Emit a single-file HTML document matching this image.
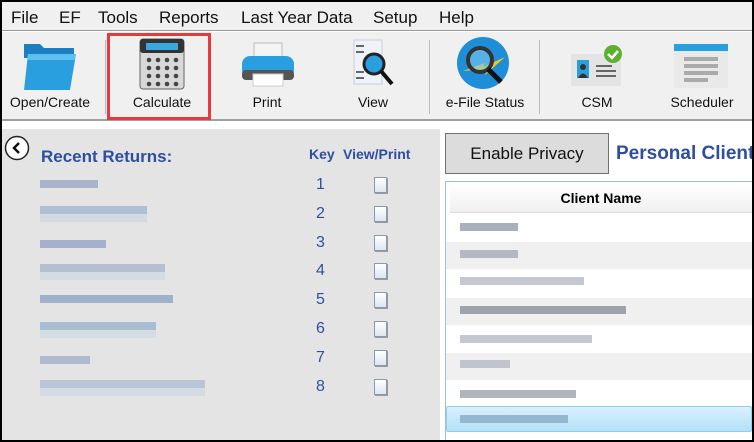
<!DOCTYPE html>
<html><head><style>
*{margin:0;padding:0;box-sizing:border-box}
body{width:754px;height:442px;overflow:hidden;background:#000;font-family:"Liberation Sans",sans-serif;position:relative}
#f{position:absolute;left:2px;top:2px;width:750px;height:438px;background:#fff;overflow:hidden}
.menu{position:absolute;left:0;top:0;width:750px;height:29px;background:#f0f0f0;border-bottom:1px solid #999;font-size:17px;color:#111}
.menu span{position:absolute;top:6px}
.tb{position:absolute;left:0;top:30px;width:750px;height:89px;background:#f0f0f0;border-bottom:2px solid #a0a0a0}
.tl{position:absolute;top:62px;font-size:14px;color:#111;text-align:center}
.sep{position:absolute;top:8px;width:1px;height:74px;background:#bbb}
.lp{position:absolute;left:0;top:127px;width:438px;height:311px;background:#e4e4e4}
.b{position:absolute;height:8px}
.k{position:absolute;left:314px;font-size:16px;color:#2e4fa0}
.doc{position:absolute;left:372px;width:13px;height:16px;background:linear-gradient(#fff,#dde6f0);border:1px solid #8a99ad;box-shadow:1px 1px 0 #999}
.rw{position:absolute;left:444px;width:306px;height:27px}
</style></head><body><div id="f">
<div class="menu"><span style="left:9px">File</span><span style="left:57px">EF</span><span style="left:96px">Tools</span><span style="left:157px">Reports</span><span style="left:239px">Last Year Data</span><span style="left:371px">Setup</span><span style="left:437px">Help</span></div>
<div class="tb">
<svg style="position:absolute;left:20px;top:8px" width="58" height="50"><path d="M2 4h16l4 4h30v10H2z" fill="#1b7fc4"/><path d="M6 14h48l-6 36H2z" fill="#2a9fe0"/><path d="M6 14h48l-1 6H5z" fill="#5cc0f0"/></svg>
<div class="tl" style="left:3px;width:90px">Open/Create</div>
<div class="sep" style="left:103px"></div>
<div style="position:absolute;left:105px;top:1px;width:104px;height:87px;border:3px solid #e8393c"></div>
<svg style="position:absolute;left:137px;top:6px" width="46" height="52"><rect x="1" y="1" width="44" height="50" rx="3" fill="#d8d8d8" stroke="#666"/><rect x="1" y="1" width="44" height="14" rx="3" fill="#333"/><rect x="7" y="5" width="32" height="7" fill="#3aa8e0"/><g fill="#444"><circle cx="10" cy="22" r="2.3"/><circle cx="19" cy="22" r="2.3"/><circle cx="28" cy="22" r="2.3"/><circle cx="37" cy="22" r="2.3"/><circle cx="10" cy="30" r="2.3"/><circle cx="19" cy="30" r="2.3"/><circle cx="28" cy="30" r="2.3"/><circle cx="37" cy="30" r="2.3"/><circle cx="10" cy="38" r="2.3"/><circle cx="19" cy="38" r="2.3"/><circle cx="28" cy="38" r="2.3"/><circle cx="37" cy="38" r="2.3"/><circle cx="10" cy="46" r="2.3"/><circle cx="19" cy="46" r="2.3"/><circle cx="28" cy="46" r="2.3"/><circle cx="37" cy="46" r="2.3"/></g></svg>
<div class="tl" style="left:110px;width:100px">Calculate</div>
<svg style="position:absolute;left:238px;top:10px" width="56" height="46"><rect x="14" y="1" width="28" height="16" fill="#f4f4f4" stroke="#bbb"/><rect x="2" y="14" width="52" height="22" rx="8" fill="#2a9fe0"/><rect x="2" y="28" width="52" height="10" rx="4" fill="#555"/><rect x="13" y="32" width="30" height="12" fill="#fff" stroke="#ccc"/></svg>
<div class="tl" style="left:230px;width:70px">Print</div>
<svg style="position:absolute;left:350px;top:6px" width="44" height="52"><rect x="2" y="2" width="28" height="44" fill="#eef3f8" stroke="#ccd"/><g stroke="#666" stroke-width="2"><path d="M4 8h8M4 14h8M4 34h8M4 40h8"/></g><circle cx="22" cy="26" r="10" fill="#2a9fe0" stroke="#222" stroke-width="3"/><path d="M29 33l11 13" stroke="#111" stroke-width="4"/></svg>
<div class="tl" style="left:336px;width:70px">View</div>
<div class="sep" style="left:427px"></div>
<svg style="position:absolute;left:455px;top:5px" width="56" height="52"><circle cx="26" cy="26" r="26" fill="#1f8ed8"/><path d="M6 34l22-8-2 4 22-10-20 18 2-6z" fill="#f5c518"/><circle cx="23" cy="23" r="12" fill="#7ccaf0" fill-opacity=".6" stroke="#333" stroke-width="4"/><path d="M31 32l13 13" stroke="#111" stroke-width="5"/></svg>
<div class="tl" style="left:437px;width:92px">e-File Status</div>
<div class="sep" style="left:537px"></div>
<svg style="position:absolute;left:569px;top:12px" width="54" height="42"><rect x="0" y="10" width="50" height="32" fill="#e4e4e4"/><rect x="6" y="16" width="12" height="18" fill="#2a9fe0"/><circle cx="12" cy="23" r="3" fill="#333"/><path d="M7 34q5-9 10 0z" fill="#333"/><path d="M25 22h16M25 27h20M25 32h20" stroke="#666" stroke-width="2"/><circle cx="42" cy="10" r="9" fill="#5bb030"/><path d="M37 10l4 4 6-7" stroke="#fff" stroke-width="2.5" fill="none"/></svg>
<div class="tl" style="left:565px;width:60px">CSM</div>
<svg style="position:absolute;left:672px;top:12px" width="54" height="44"><rect x="0" y="0" width="54" height="44" fill="#e9e9e9"/><rect x="0" y="0" width="54" height="7" fill="#2a9fe0"/><g fill="#aaa"><rect x="10" y="13" width="34" height="4"/><rect x="10" y="20" width="34" height="4"/><rect x="10" y="27" width="34" height="4"/><rect x="10" y="34" width="24" height="4"/></g></svg>
<div class="tl" style="left:660px;width:80px">Scheduler</div>
</div>
<div class="lp">
<svg style="position:absolute;left:2px;top:6px" width="26" height="26"><circle cx="13" cy="13" r="11.5" fill="#fff" stroke="#222" stroke-width="1.5"/><path d="M15 8l-5 5 5 5" stroke="#111" stroke-width="2.5" fill="none"/></svg>
<div style="position:absolute;left:39px;top:18px;font-size:17px;font-weight:bold;color:#2e4fa0">Recent Returns:</div>
<div style="position:absolute;left:307px;top:17px;font-size:14px;font-weight:bold;color:#2e4fa0">Key</div>
<div style="position:absolute;left:341px;top:17px;font-size:14px;font-weight:bold;color:#2e4fa0">View/Print</div>
<div class="b" style="left:38px;top:51px;width:58px;background:#a8b4cc"></div>
<div class="b" style="left:38px;top:77px;width:107px;background:#b0c0d4"></div><div class="b" style="left:38px;top:85px;width:107px;background:#d4dae2"></div>
<div class="b" style="left:38px;top:111px;width:66px;background:#a4b0cc"></div>
<div class="b" style="left:38px;top:135px;width:125px;background:#b4c0d2"></div><div class="b" style="left:38px;top:143px;width:125px;background:#d6dbe3"></div>
<div class="b" style="left:38px;top:166px;width:133px;background:#9fb2cc"></div>
<div class="b" style="left:38px;top:193px;width:116px;background:#a8bcd2"></div><div class="b" style="left:38px;top:201px;width:116px;background:#d4dce4"></div>
<div class="b" style="left:38px;top:227px;width:50px;background:#b0bace"></div>
<div class="b" style="left:38px;top:251px;width:165px;background:#b8c6d8"></div><div class="b" style="left:38px;top:259px;width:165px;background:#d4dbe3"></div>
<div class="k" style="top:47px">1</div><div class="k" style="top:76px">2</div><div class="k" style="top:105px">3</div><div class="k" style="top:133px">4</div><div class="k" style="top:162px">5</div><div class="k" style="top:191px">6</div><div class="k" style="top:220px">7</div><div class="k" style="top:249px">8</div>
<div class="doc" style="top:48px"></div><div class="doc" style="top:77px"></div><div class="doc" style="top:106px"></div><div class="doc" style="top:134px"></div><div class="doc" style="top:163px"></div><div class="doc" style="top:192px"></div><div class="doc" style="top:221px"></div><div class="doc" style="top:250px"></div>
</div>
<div style="position:absolute;left:443px;top:131px;width:164px;height:41px;background:#dcdcdc;border:1px solid #707070;font-size:17px;color:#111;text-align:center;line-height:40px">Enable Privacy</div>
<div style="position:absolute;left:614px;top:141px;font-size:19px;font-weight:bold;color:#2e4fa0;white-space:nowrap">Personal Client</div>
<div style="position:absolute;left:443px;top:179px;width:310px;height:262px;border:1px solid #9ac0de;background:#fff"></div>
<div style="position:absolute;left:448px;top:182px;width:302px;height:29px;background:linear-gradient(#fff,#f0f0f0);border-bottom:1px solid #ddd;font-size:14px;font-weight:bold;text-align:center;line-height:29px;color:#000">Client Name</div>
<div class="rw" style="top:240px;background:#f0f0f0"></div>
<div class="rw" style="top:296px;background:#f0f0f0"></div>
<div class="rw" style="top:351px;background:#f0f0f0"></div>
<div class="rw" style="top:404px;height:26px;background:linear-gradient(#d8f0fc,#b4e0f8);border:1px solid #8fd0f0;border-radius:2px"></div>
<div class="b" style="left:458px;top:221px;width:58px;background:#a8b0bc"></div>
<div class="b" style="left:458px;top:248px;width:58px;background:#b4b8c4"></div>
<div class="b" style="left:458px;top:275px;width:124px;background:#c4c8d2"></div>
<div class="b" style="left:458px;top:304px;width:166px;background:#9ea4ae"></div>
<div class="b" style="left:458px;top:333px;width:132px;background:#c4c8d0"></div>
<div class="b" style="left:458px;top:358px;width:50px;background:#c0c4cc"></div>
<div class="b" style="left:458px;top:388px;width:116px;background:#b0b4bc"></div>
<div class="b" style="left:458px;top:413px;width:108px;background:#94b8d0"></div>
</div></body></html>
